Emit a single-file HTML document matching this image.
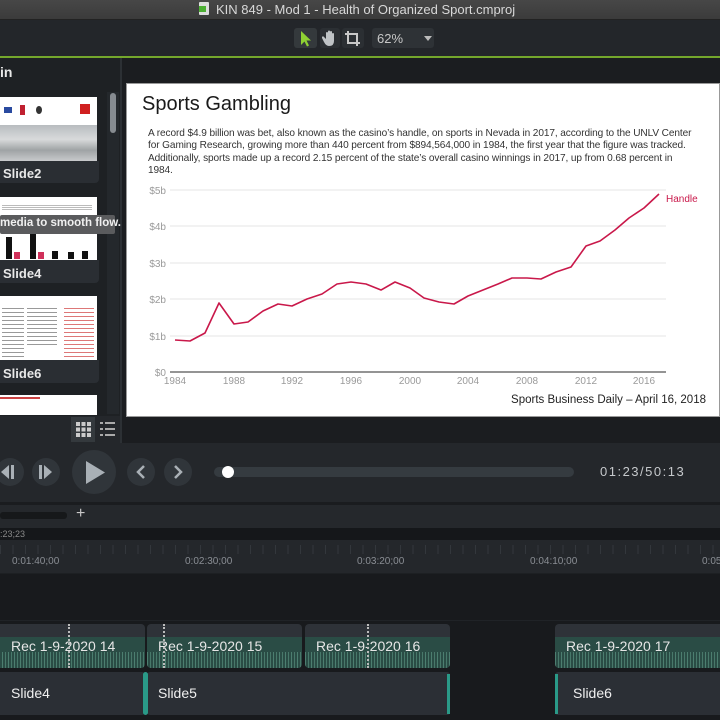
<!DOCTYPE html>
<html><head><meta charset="utf-8"><style>
*{margin:0;padding:0;box-sizing:border-box}
body{width:720px;height:720px;overflow:hidden;background:#181a1d;font-family:"Liberation Sans",sans-serif;position:relative}
.a{position:absolute}
.circ{position:absolute;border-radius:50%;background:#30353a}
.lbl{color:#e8e8e8;font-size:14px}
.clip{position:absolute;top:624px;height:44px;border-radius:4px;background:#2e3238;overflow:hidden}
.clip .g{position:absolute;left:0;right:0;top:13px;bottom:0;background:#2a4c45}
.clip .w{position:absolute;left:0;right:0;bottom:0;height:16px;background:repeating-linear-gradient(90deg,#558a7a 0 1px,transparent 1px 3px,#4f8373 3px 4px,transparent 4px 6px);opacity:.8}
.clip span{position:absolute;left:11px;top:14px;color:#e6e6e6;font-size:14px}
.sc{position:absolute;top:672px;height:43px;background:#2b2f35;border-radius:3px}
.sc span{position:absolute;left:11px;top:13px;color:#f0f0f0;font-size:14px}
.rl{position:absolute;top:556px;color:#8a8e94;font-size:10px}
</style></head><body>
<!-- title bar -->
<div class="a" style="left:0;top:0;width:720px;height:20px;background:linear-gradient(#474747,#3b3b3b);border-bottom:1px solid #222"></div>
<div class="a" style="left:199px;top:2px;width:10px;height:13px;background:#ddd;border-radius:1px"></div>
<div class="a" style="left:199px;top:6px;width:7px;height:6px;background:#4caf33"></div>
<div class="a" style="left:216px;top:2px;color:#d8d8d8;font-size:13px">KIN 849 - Mod 1 - Health of Organized Sport.cmproj</div>
<!-- toolbar -->
<div class="a" style="left:0;top:20px;width:720px;height:36px;background:#23262a"></div>
<div class="a" style="left:294px;top:28px;width:23px;height:20px;background:#34393c;border-radius:3px"></div>
<svg class="a" style="left:299px;top:30px" width="14" height="17"><path d="M2 1 L2 15 L5.5 11.5 L8 16.5 L10 15.5 L7.5 10.5 L12 10.5 Z" fill="#8fd133"/></svg>
<div class="a" style="left:320px;top:28px;width:20px;height:20px;background:#2b2f33;border-radius:3px"></div>
<svg class="a" style="left:322px;top:29px" width="16" height="18"><path d="M4 10 V4 a1 1 0 0 1 2 0 V9 V2.5 a1 1 0 0 1 2 0 V9 V3 a1 1 0 0 1 2 0 V9 V5 a1 1 0 0 1 2 0 V12 q0 5 -5 5 q-3 0 -5 -4 l-2 -4 a1 1 0 0 1 2 -1 Z" fill="#bfc3c6"/></svg>
<div class="a" style="left:342px;top:28px;width:22px;height:20px;background:#2b2f33;border-radius:3px"></div>
<svg class="a" style="left:344px;top:30px" width="17" height="17"><path d="M4 1 V13 H16 M1 4 H13 V16" stroke="#c8c8c8" stroke-width="2" fill="none"/></svg>
<div class="a" style="left:372px;top:28px;width:62px;height:20px;background:#2e3236;border-radius:3px"></div>
<div class="a" style="left:377px;top:31px;color:#c8c8c8;font-size:13px">62%</div>
<div class="a" style="left:424px;top:36px;border-left:4px solid transparent;border-right:4px solid transparent;border-top:5px solid #bbb"></div>
<div class="a" style="left:0;top:56px;width:720px;height:2px;background:#74a72c"></div>
<!-- left panel -->
<div class="a" style="left:0;top:58px;width:120px;height:385px;background:#1e2124"></div>
<div class="a" style="left:120px;top:58px;width:2px;height:385px;background:#2c3034"></div>
<div class="a" style="left:0;top:64px;color:#e8e8e8;font-size:14px;font-weight:bold">in</div>
<div class="a" style="left:107px;top:92px;width:12px;height:322px;background:#24282c"></div>
<div class="a" style="left:110px;top:93px;width:6px;height:40px;background:#868b90;border-radius:3px"></div>
<!-- thumbs -->
<div class="a" style="left:0;top:97px;width:97px;height:64px;background:#fff;overflow:hidden">
 <div class="a" style="left:0;top:28px;width:97px;height:36px;background:linear-gradient(#b8bcbf,#d8dadb 40%,#9fa3a5 70%,#c8cacc)"></div>
 <div class="a" style="left:4px;top:10px;width:8px;height:6px;background:#2a4aa0"></div>
 <div class="a" style="left:20px;top:8px;width:5px;height:10px;background:#c02030"></div>
 <div class="a" style="left:36px;top:9px;width:6px;height:8px;background:#333;border-radius:50%"></div>
 <div class="a" style="left:80px;top:7px;width:10px;height:10px;background:#d02020"></div>
</div>
<div class="a" style="left:0;top:161px;width:99px;height:22px;background:#2a2e33;border-radius:0 0 4px 0"></div>
<div class="a lbl" style="left:3px;top:166px;font-weight:bold;font-size:13px">Slide2</div>
<div class="a" style="left:0;top:197px;width:97px;height:63px;background:#fff;overflow:hidden">
 <div class="a" style="left:2px;top:8px;width:90px;height:6px;background:repeating-linear-gradient(#bbb 0 1px,transparent 1px 2px)"></div>
 <div class="a" style="left:6px;top:40px;width:6px;height:22px;background:#111"></div>
 <div class="a" style="left:14px;top:55px;width:6px;height:7px;background:#d0305a"></div>
 <div class="a" style="left:30px;top:32px;width:6px;height:30px;background:#111"></div>
 <div class="a" style="left:38px;top:55px;width:6px;height:7px;background:#d0305a"></div>
 <div class="a" style="left:52px;top:54px;width:6px;height:8px;background:#111"></div>
 <div class="a" style="left:68px;top:55px;width:6px;height:7px;background:#111"></div>
 <div class="a" style="left:82px;top:54px;width:6px;height:8px;background:#111"></div>
</div>
<div class="a" style="left:0;top:260px;width:99px;height:23px;background:#2a2e33;border-radius:0 0 4px 0"></div>
<div class="a lbl" style="left:3px;top:266px;font-weight:bold;font-size:13px">Slide4</div>
<div class="a" style="left:0;top:296px;width:97px;height:64px;background:#fff;overflow:hidden">
 <div class="a" style="left:2px;top:12px;width:22px;height:50px;background:repeating-linear-gradient(#999 0 1px,transparent 1px 4px)"></div>
 <div class="a" style="left:27px;top:12px;width:30px;height:40px;background:repeating-linear-gradient(#999 0 1px,transparent 1px 4px)"></div>
 <div class="a" style="left:64px;top:12px;width:30px;height:50px;background:repeating-linear-gradient(#d77 0 1px,transparent 1px 4px)"></div>
</div>
<div class="a" style="left:0;top:360px;width:99px;height:23px;background:#2a2e33;border-radius:0 0 4px 0"></div>
<div class="a lbl" style="left:3px;top:366px;font-weight:bold;font-size:13px">Slide6</div>
<div class="a" style="left:0;top:395px;width:97px;height:20px;background:#fff">
 <div class="a" style="left:0;top:2px;width:40px;height:2px;background:#c44"></div>
</div>
<div class="a" style="left:0;top:215px;width:115px;height:19px;background:#5a5b5d;border-radius:2px"></div>
<div class="a" style="left:0;top:217px;color:#f0f0f0;font-size:11.5px;font-weight:bold;white-space:nowrap">media to smooth flow.</div>
<div class="a" style="left:0;top:416px;width:120px;height:27px;background:#24272b"></div>
<div class="a" style="left:71px;top:417px;width:24px;height:25px;background:#34393d"></div>
<svg class="a" style="left:76px;top:422px" width="15" height="15" fill="#ccc"><rect x="0" y="0" width="4" height="4"/><rect x="5.5" y="0" width="4" height="4"/><rect x="11" y="0" width="4" height="4"/><rect x="0" y="5.5" width="4" height="4"/><rect x="5.5" y="5.5" width="4" height="4"/><rect x="11" y="5.5" width="4" height="4"/><rect x="0" y="11" width="4" height="4"/><rect x="5.5" y="11" width="4" height="4"/><rect x="11" y="11" width="4" height="4"/></svg>
<svg class="a" style="left:100px;top:421px" width="16" height="16" fill="#aaa"><rect x="0" y="1" width="3" height="2"/><rect x="5" y="1" width="10" height="2"/><rect x="0" y="7" width="3" height="2"/><rect x="5" y="7" width="10" height="2"/><rect x="0" y="13" width="3" height="2"/><rect x="5" y="13" width="10" height="2"/></svg>
<!-- canvas -->
<div class="a" style="left:122px;top:58px;width:598px;height:385px;background:#1b1d20"></div>
<div class="a" style="left:126px;top:83px;width:594px;height:334px;background:#fff;border:1px solid #999"></div>
<div class="a" style="left:142px;top:93px;color:#1a1a1a;font-size:20px">Sports Gambling</div>
<div class="a" style="left:148px;top:128px;width:549px;color:#333;font-size:10.1px;line-height:12.3px;letter-spacing:-0.1px">A record $4.9 billion was bet, also known as the casino’s handle, on sports in Nevada in 2017, according to the UNLV Center for Gaming Research, growing more than 440 percent from $894,564,000 in 1984, the first year that the figure was tracked. Additionally, sports made up a record 2.15 percent of the state’s overall casino winnings in 2017, up from 0.68 percent in 1984.</div>
<svg class="a" style="left:0;top:0" width="720" height="420" font-family="Liberation Sans,sans-serif">
 <g stroke="#e6e6e6" stroke-width="1"><line x1="170" y1="190" x2="666" y2="190"/><line x1="170" y1="226" x2="666" y2="226"/><line x1="170" y1="263" x2="666" y2="263"/><line x1="170" y1="299" x2="666" y2="299"/><line x1="170" y1="336" x2="666" y2="336"/></g>
 <line x1="170" y1="372" x2="666" y2="372" stroke="#555" stroke-width="1.2"/>
 <g fill="#9a9a9a" font-size="10" text-anchor="end"><text x="166" y="194">$5b</text><text x="166" y="230">$4b</text><text x="166" y="267">$3b</text><text x="166" y="303">$2b</text><text x="166" y="340">$1b</text><text x="166" y="376">$0</text></g>
 <g fill="#9a9a9a" font-size="10" text-anchor="middle"><text x="175" y="384">1984</text><text x="234" y="384">1988</text><text x="292" y="384">1992</text><text x="351" y="384">1996</text><text x="410" y="384">2000</text><text x="468" y="384">2004</text><text x="527" y="384">2008</text><text x="586" y="384">2012</text><text x="644" y="384">2016</text></g>
 <polyline fill="none" stroke="#c9184a" stroke-width="1.6" stroke-linejoin="round" points="175,340 190,341 205,333 219,303 234,324 248,322 263,311 278,304 292,306 307,299 322,294 337,284 351,282 366,284 381,290 395,282 410,288 424,298 439,302 454,304 468,296 483,290 498,284 512,278 527,278 541,279 556,272 571,267 586,246 600,241 615,230 629,218 644,208 659,194"/>
 <text x="666" y="202" fill="#c9184a" font-size="10">Handle</text>
 <text x="706" y="403" fill="#222" font-size="11.5" text-anchor="end">Sports Business Daily – April 16, 2018</text>
</svg>
<!-- playback -->
<div class="a" style="left:0;top:443px;width:720px;height:59px;background:#24272b"></div>
<div class="circ" style="left:-4px;top:458px;width:28px;height:28px"></div>
<svg class="a" style="left:0;top:464px" width="20" height="16"><path d="M1 8 L9 1 V15 Z" fill="#a9b0b6"/><rect x="11" y="1" width="3" height="14" fill="#a9b0b6"/></svg>
<div class="circ" style="left:32px;top:458px;width:28px;height:28px"></div>
<svg class="a" style="left:38px;top:464px" width="18" height="16"><rect x="1" y="1" width="3" height="14" fill="#a9b0b6"/><path d="M6 1 L14 8 L6 15 Z" fill="#a9b0b6"/></svg>
<div class="circ" style="left:72px;top:450px;width:44px;height:44px"></div>
<svg class="a" style="left:84px;top:460px" width="24" height="26"><path d="M2 1 L21 12.5 L2 24 Z" fill="#a9b0b6"/></svg>
<div class="circ" style="left:127px;top:458px;width:28px;height:28px"></div>
<svg class="a" style="left:134px;top:464px" width="14" height="16"><path d="M10 2 L4 8 L10 14" stroke="#a9b0b6" stroke-width="2.5" fill="none"/></svg>
<div class="circ" style="left:164px;top:458px;width:28px;height:28px"></div>
<svg class="a" style="left:171px;top:464px" width="14" height="16"><path d="M4 2 L10 8 L4 14" stroke="#a9b0b6" stroke-width="2.5" fill="none"/></svg>
<div class="a" style="left:214px;top:467px;width:360px;height:10px;background:#353b40;border-radius:5px"></div>
<div class="a" style="left:222px;top:466px;width:12px;height:12px;background:#fff;border-radius:50%"></div>
<div class="a" style="left:600px;top:464px;color:#c6c9cc;font-size:13px;letter-spacing:1.5px">01:23/50:13</div>
<div class="a" style="left:0;top:502px;width:720px;height:3px;background:#1a1c1f"></div>
<div class="a" style="left:0;top:505px;width:720px;height:23px;background:#25282c"></div>
<div class="a" style="left:0;top:512px;width:67px;height:7px;background:#16181a;border-radius:3px"></div>
<div class="a" style="left:76px;top:505px;color:#c8c8c8;font-size:16px">+</div>
<div class="a" style="left:0;top:528px;width:720px;height:12px;background:#15171a"></div>
<div class="a" style="left:0;top:529px;color:#888;font-size:9px">:23;23</div>
<div class="a" style="left:0;top:540px;width:720px;height:34px;background:#24272b;border-bottom:1px solid #1d2023"></div>
<div class="a" style="left:0;top:545px;width:720px;height:9px;background:repeating-linear-gradient(90deg,#33373c 0 1px,transparent 1px 12.5px)"></div>
<div class="rl" style="left:12px">0:01:40;00</div>
<div class="rl" style="left:185px">0:02:30;00</div>
<div class="rl" style="left:357px">0:03:20;00</div>
<div class="rl" style="left:530px">0:04:10;00</div>
<div class="rl" style="left:702px">0:05</div>
<div class="a" style="left:0;top:620px;width:720px;height:1px;background:#202327"></div>
<!-- audio clips -->
<div class="clip" style="left:-4px;width:149px"><div class="g"></div><div class="w"></div><span style="left:15px">Rec 1-9-2020 14</span></div>
<div class="clip" style="left:147px;width:155px"><div class="g"></div><div class="w"></div><span>Rec 1-9-2020 15</span></div>
<div class="clip" style="left:305px;width:145px"><div class="g"></div><div class="w"></div><span>Rec 1-9-2020 16</span></div>
<div class="clip" style="left:555px;width:170px"><div class="g"></div><div class="w"></div><span>Rec 1-9-2020 17</span></div>
<div class="a" style="left:68px;top:624px;width:2px;height:44px;border-left:2px dotted #bbb"></div>
<div class="a" style="left:163px;top:624px;width:2px;height:44px;border-left:2px dotted #bbb"></div>
<div class="a" style="left:367px;top:624px;width:2px;height:44px;border-left:2px dotted #bbb"></div>
<!-- slide clips -->
<div class="sc" style="left:-4px;width:149px"><span style="left:15px">Slide4</span></div>
<div class="sc" style="left:147px;width:303px"><span>Slide5</span></div>
<div class="sc" style="left:555px;width:170px"><span style="left:18px">Slide6</span></div>
<div class="a" style="left:143px;top:672px;width:5px;height:43px;background:#2a9a88;border-radius:3px"></div>
<div class="a" style="left:447px;top:674px;width:3px;height:40px;background:#2a9a88"></div>
<div class="a" style="left:555px;top:674px;width:3px;height:40px;background:#2a9a88"></div>
</body></html>
